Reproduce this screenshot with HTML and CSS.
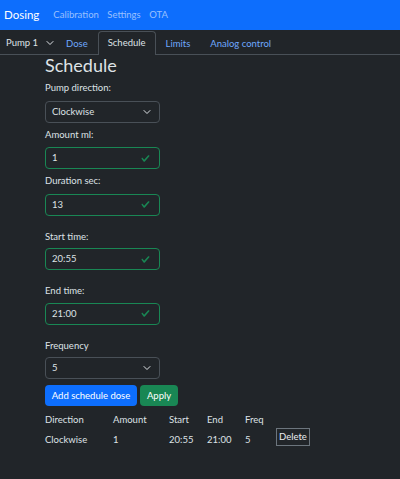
FILE: index.html
```html
<!DOCTYPE html>
<html>
<head>
<meta charset="utf-8">
<link rel="stylesheet" href="styles.css">
</head>
<body>
<nav class="navbar">
  <span class="brand">Dosing</span>
  <a class="nav-link">Calibration</a>
  <a class="nav-link">Settings</a>
  <a class="nav-link">OTA</a>
</nav>
<div class="tabbar">
  <div class="pump-select">Pump 1<svg class="chev" viewBox="0 0 16 16" width="8" height="8"><path d="M2 5l6 6 6-6" fill="none" stroke="#dee2e6" stroke-width="2" stroke-linecap="round" stroke-linejoin="round"/></svg></div>
  <a class="tab">Dose</a>
  <a class="tab active">Schedule</a>
  <a class="tab">Limits</a>
  <a class="tab">Analog control</a>
</div>
<main class="content">
  <h2 class="title">Schedule</h2>
  <label class="lbl">Pump direction:</label>
  <div class="control select">Clockwise<svg class="chev" viewBox="0 0 16 16" width="8" height="8"><path d="M2 5l6 6 6-6" fill="none" stroke="#dee2e6" stroke-width="2" stroke-linecap="round" stroke-linejoin="round"/></svg></div>
  <label class="lbl">Amount ml:</label>
  <div class="control valid">1<svg class="check" viewBox="0 0 8 8" width="9" height="9"><path fill="#198754" d="M2.3 6.73.6 4.53c-.4-1.04.46-1.4 1.1-.8l1.1 1.4 3.4-3.8c.6-.63 1.6-.27 1.2.7l-4 4.6c-.43.5-.8.4-1.1.1z"/></svg></div>
  <label class="lbl">Duration sec:</label>
  <div class="control valid">13<svg class="check" viewBox="0 0 8 8" width="9" height="9"><path fill="#198754" d="M2.3 6.73.6 4.53c-.4-1.04.46-1.4 1.1-.8l1.1 1.4 3.4-3.8c.6-.63 1.6-.27 1.2.7l-4 4.6c-.43.5-.8.4-1.1.1z"/></svg></div>
  <label class="lbl gap">Start time:</label>
  <div class="control valid">20:55<svg class="check" viewBox="0 0 8 8" width="9" height="9"><path fill="#198754" d="M2.3 6.73.6 4.53c-.4-1.04.46-1.4 1.1-.8l1.1 1.4 3.4-3.8c.6-.63 1.6-.27 1.2.7l-4 4.6c-.43.5-.8.4-1.1.1z"/></svg></div>
  <label class="lbl gap">End time:</label>
  <div class="control valid">21:00<svg class="check" viewBox="0 0 8 8" width="9" height="9"><path fill="#198754" d="M2.3 6.73.6 4.53c-.4-1.04.46-1.4 1.1-.8l1.1 1.4 3.4-3.8c.6-.63 1.6-.27 1.2.7l-4 4.6c-.43.5-.8.4-1.1.1z"/></svg></div>
  <label class="lbl gap">Frequency</label>
  <div class="control select">5<svg class="chev" viewBox="0 0 16 16" width="8" height="8"><path d="M2 5l6 6 6-6" fill="none" stroke="#dee2e6" stroke-width="2" stroke-linecap="round" stroke-linejoin="round"/></svg></div>
  <div class="buttons">
    <button class="btn primary">Add schedule dose</button>
    <button class="btn success">Apply</button>
  </div>
  <table class="sched">
    <thead>
      <tr><th class="c1">Direction</th><th class="c2">Amount</th><th class="c3">Start</th><th class="c4">End</th><th class="c5">Freq</th><th></th></tr>
    </thead>
    <tbody>
      <tr><td>Clockwise</td><td>1</td><td>20:55</td><td>21:00</td><td>5</td><td><button class="del">Delete</button></td></tr>
    </tbody>
  </table>
</main>
</body>
</html>
```
FILE: styles.css
```css
* { box-sizing: border-box; }
html, body { margin: 0; padding: 0; }
body {
  background: #212529;
  color: #dee2e6;
  font-family: "Lato", "Noto Sans", sans-serif;
  font-size: 9.5px;
  line-height: 14px;
  width: 400px;
  height: 479px;
  overflow: hidden;
  white-space: nowrap;
}
.navbar {
  background: #0d6efd;
  height: 30px;
  display: flex;
  align-items: center;
  padding-left: 4px;
  margin-bottom: 1px;
}
.brand {
  color: #fff;
  font-size: 11.5px;
  margin-right: 14px;
}
.nav-link {
  color: rgba(255,255,255,0.58);
  margin-right: 8.5px;
}
.tabbar {
  height: 24px;
  display: flex;
  align-items: flex-end;
  border-bottom: 1px solid #495057;
}
.pump-select {
  width: 56px;
  height: 23px;
  display: flex;
  align-items: center;
  justify-content: space-between;
  padding: 0 2px 0 6px;
  align-self: center;
}
.tab {
  color: #6ea8fe;
  padding: 0 9px;
  height: 23px;
  display: flex;
  align-items: center;
  border: 1px solid transparent;
  border-bottom: none;
  border-radius: 4px 4px 0 0;
  margin-bottom: -1px;
}
.tab.active {
  color: #dee2e6;
  background: #212529;
  border-color: #495057;
  height: 24px;
  padding-bottom: 1px;
}
.content {
  padding-left: 45px;
  display: flex;
  flex-direction: column;
  align-items: flex-start;
}
.title {
  font-size: 18px;
  font-weight: 400;
  margin: 0;
  line-height: 21px;
}
.lbl {
  display: block;
  margin-top: 5px;
  margin-bottom: 5.5px;
}
.lbl.gap { margin-top: 14px; margin-bottom: 4.5px; }
.control {
  width: 115px;
  height: 22px;
  flex: none;
  border: 1px solid #495057;
  border-radius: 4px;
  display: flex;
  align-items: center;
  justify-content: space-between;
  padding: 0 8px 0 6px;
  background: #212529;
}
.control.valid { border-color: #198754; padding-right: 9px; }
.buttons {
  display: flex;
  gap: 3px;
  margin-top: 6px;
}
.btn {
  font: inherit;
  height: 21px;
  border: none;
  border-radius: 4px;
  color: #fff;
  padding: 0;
}
.btn.primary { background: #0d6efd; width: 92px; }
.btn.success { background: #198754; width: 38px; }
.sched {
  border-collapse: collapse;
  margin-top: 7px;
}
.sched th, .sched td {
  font-weight: 400;
  text-align: left;
  padding: 0;
  vertical-align: top;
}
.sched th { height: 20px; }
.c1 { width: 68px; }
.c2 { width: 56px; }
.c3 { width: 38px; }
.c4 { width: 38px; }
.c5 { width: 31px; }
.del {
  display: block;
  font: inherit;
  background: #212529;
  color: #e9ecef;
  border: 1px solid #6c757d;
  border-radius: 0;
  padding: 1px 2px;
  width: 34px;
  margin-top: -5px;
}
```
